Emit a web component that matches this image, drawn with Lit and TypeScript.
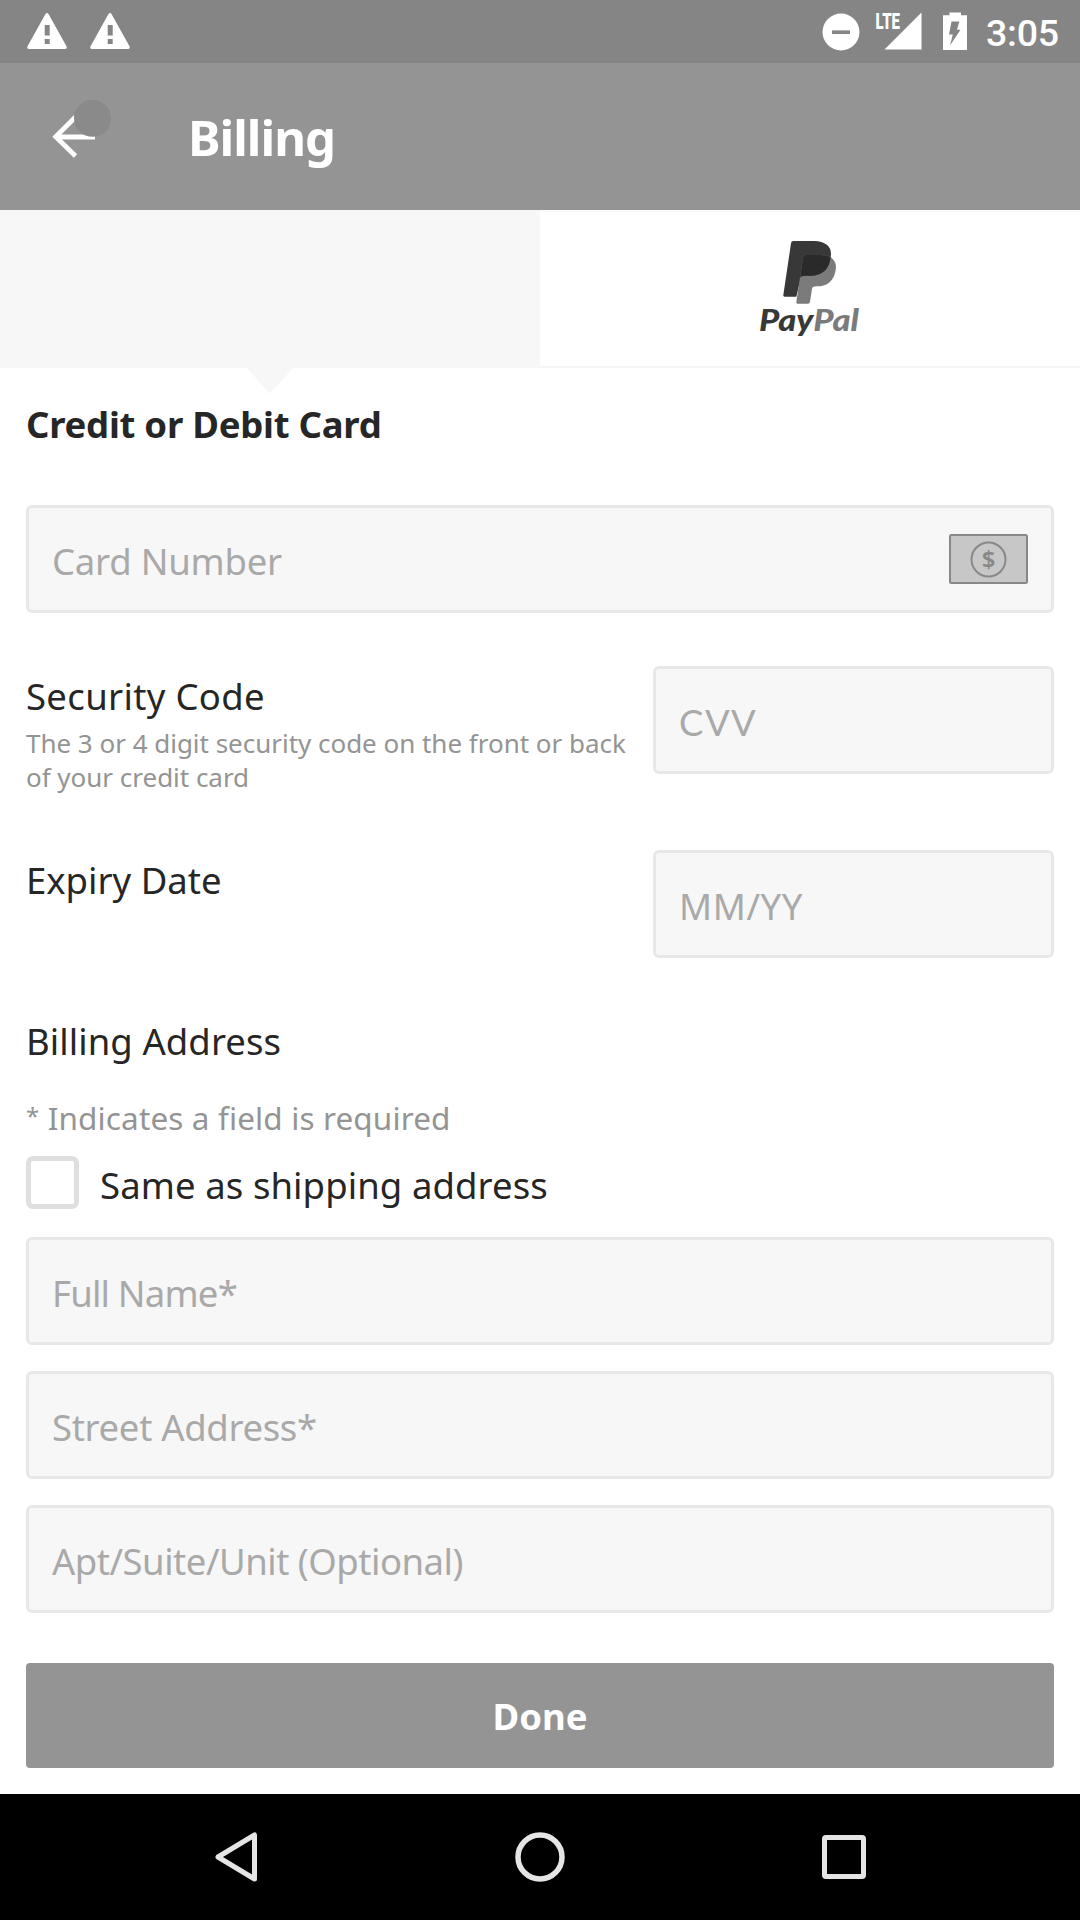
import { LitElement, html, css, svg } from "lit";
import { customElement, property } from "lit/decorators.js";

@customElement("form-field")
export class FormField extends LitElement {
  @property() label = "";
  static styles = css`
    :host {
      display: flex;
      align-items: center;
      justify-content: space-between;
      box-sizing: border-box;
      height: 108px;
      border: 3px solid #e8e8e8;
      border-radius: 6px;
      background: #f7f7f7;
      padding: 0 23px;
      font-size: 36.5px;
      line-height: 44px;
      color: #a9a9a9;
    }
    .label {
      padding-top: 3px;
      white-space: nowrap;
    }
  `;
  render() {
    return html`<span class="label">${this.label}</span><slot></slot>`;
  }
}

const warning = svg`
  <path fill="#fff" fill-rule="evenodd" d="M18.2 1.4 Q20 -1.4 21.8 1.4 L39.6 33.5 Q40.3 36 37.8 36 H2.200 Q-.3 36 .4 33.500Z M17.700 12 V22.500 H22.700 V12Z M17.700 26 V31 H22.700 V26Z"/>`;

@customElement("app-root")
export class AppRoot extends LitElement {
  static styles = css`
    :host {
      display: flex;
      flex-direction: column;
      width: 1080px;
      height: 1920px;
      overflow: hidden;
      background: #fff;
      color: #262626;
      font-family: "Noto Sans", sans-serif;
    }
    svg {
      display: block;
      flex: none;
    }
    .status {
      display: flex;
      align-items: center;
      height: 63px;
      background: #858585;
      color: #fff;
    }
    .alerts {
      display: flex;
      gap: 23px;
      padding: 0 0 1px 27px;
      flex: 1;
    }
    .signals {
      width: 210px;
      height: 63px;
    }
    .clock {
      width: 94px;
      font: 500 37.5px/44px Roboto, sans-serif;
      letter-spacing: -0.27px;
      padding-top: 2px;
    }
    .lte {
      font: 900 22px Roboto, sans-serif;
    }
    .appbar {
      display: flex;
      align-items: center;
      height: 147px;
      background: #949494;
      color: #fff;
    }
    .back {
      width: 188px;
      height: 147px;
    }
    .title {
      font-weight: 700;
      font-size: 49px;
      line-height: 60px;
      letter-spacing: -0.99px;
    }
    .tabs {
      display: grid;
      grid-template-columns: 1fr 1fr;
      height: 158px;
    }
    .tab {
      position: relative;
      background: #f7f7f7;
    }
    .pointer {
      position: absolute;
      left: 247px;
      top: 158px;
    }
    .paypal {
      display: flex;
      justify-content: center;
      box-sizing: border-box;
      border-top: 2px solid #f9f9f9;
      border-bottom: 2px solid #f5f5f5;
    }
    .brand {
      font: italic 900 30px Lato, sans-serif;
    }
    .form {
      display: flex;
      flex-direction: column;
      padding: 34px 26px 26px;
    }
    .heading {
      font-size: 36.5px;
      line-height: 44px;
      letter-spacing: -0.25px;
      font-weight: 700;
      margin: 0 0 59px;
    }
    .row {
      display: flex;
      justify-content: space-between;
    }
    .row form-field {
      width: 401px;
    }
    .security {
      margin-top: 53px;
      height: 128px;
    }
    .expiry {
      margin-top: 56px;
      height: 108px;
    }
    .label {
      font-size: 36.5px;
      line-height: 44px;
      padding-top: 8px;
      white-space: nowrap;
    }
    .code {
      letter-spacing: 0.33px;
    }
    .hint {
      margin-top: 8px;
      font-size: 26px;
      line-height: 34px;
      letter-spacing: -0.02px;
      color: #949494;
      white-space: nowrap;
    }
    .address {
      font-size: 36.5px;
      line-height: 44px;
      margin-top: 61px;
      letter-spacing: 0.07px;
    }
    .required {
      font-size: 31.5px;
      line-height: 40px;
      height: 40px;
      margin-top: 35px;
      letter-spacing: 0.13px;
      color: #949494;
    }
    .asterisk {
      font-size: 24px;
      line-height: 24px;
      vertical-align: 5px;
    }
    .same {
      display: flex;
      align-items: center;
      gap: 21px;
      height: 53px;
      margin: 18px 0 28px;
      font-size: 36.5px;
      line-height: 44px;
      letter-spacing: 0.09px;
    }
    .same-text {
      padding-top: 5px;
    }
    .box {
      box-sizing: border-box;
      width: 53px;
      height: 53px;
      border: 5px solid #dfdfdf;
      border-radius: 7px;
    }
    .fields {
      display: flex;
      flex-direction: column;
      gap: 26px;
    }
    .card {
      letter-spacing: -0.23px;
    }
    .cvv {
      font-family: Lato, sans-serif;
      letter-spacing: 1.5px;
    }
    .mmyy {
      letter-spacing: 0.6px;
    }
    .name {
      letter-spacing: -0.79px;
    }
    .street {
      letter-spacing: -0.32px;
    }
    .apt {
      letter-spacing: -0.49px;
    }
    .dollar {
      font: 600 24px "Noto Sans", sans-serif;
      letter-spacing: 0;
    }
    .done {
      display: flex;
      align-items: center;
      justify-content: center;
      height: 105px;
      margin-top: 50px;
      border: 0;
      border-radius: 4px;
      background: #949494;
      color: #fff;
      font: 700 36.5px/44px "Noto Sans", sans-serif;
    }
    .nav {
      display: flex;
      align-items: center;
      justify-content: center;
      gap: 240px;
      flex: 1;
      background: #000;
    }
  `;

  render() {
    return html`
      <div class="status">
        <div class="alerts">
          <svg width="40" height="36">${warning}</svg>
          <svg width="40" height="36">${warning}</svg>
        </div>
        <svg class="signals" viewBox="776 0 210 63">
          <circle cx="841" cy="32" r="18.500" fill="#fff" />
          <path d="M832 32.200 H850" stroke="#858585" stroke-width="3.700" />
          <text class="lte" x="875.500" y="29.300" textLength="24.500" lengthAdjust="spacingAndGlyphs" fill="#fff">LTE</text>
          <path d="M921.500 12.500 V49.500 H884.500Z" fill="#fff" />
          <path d="M949.500 12.500 H961 V15.300 H967 V50 H943 V15.300 H949.500Z" fill="#fff" />
          <path d="M951.500 21.500 H959.300 L957 29.700 H960.500 L950 45.500 L952.800 34.500 H949Z" fill="#858585" />
        </svg>
        <div class="clock">3:05</div>
      </div>
      <div class="appbar">
        <svg class="back" viewBox="0 63 188 147">
          <path d="M75.500 117 L55.700 136.700 L75.500 156 M55.700 137 H95" fill="none" stroke="#fff" stroke-width="4.800" />
          <circle cx="92.500" cy="118.300" r="18.500" fill="#8a8a8a" />
        </svg>
        <div class="title">Billing</div>
      </div>
      <div class="tabs">
        <div class="tab">
          <svg class="pointer" width="46" height="26"><path d="M0 0 H46 L24.500 24.300 Q23 25.500 21.500 24.300Z" fill="#f7f7f7" /></svg>
        </div>
        <div class="paypal">
          <svg width="160" height="154" viewBox="0 36 480 462">
            <path d="M190 123 H252 Q303 125 303 163 Q297 228 240 228 H214 L199 290 H164 Q159 290 160 285 L183 130 Q184 123 190 123Z" fill="#383838" />
            <path d="M226 165 H278 Q318 170 318 203 Q312 259 260 259 Q247 259 246 266 L240 305 Q239 311 234 311 H203 Q198 311 199 306 L219 172 Q220 165 226 165Z" fill="#7b7b7b" />
            <path d="M226 165 H272 Q290 165 302 172 Q296 228 238 228 Q214 226 210 234 L219 172 Q220 165 226 165Z" fill="#2a2a2a" />
            <g transform="scale(3)">
              <text class="brand" x="29" y="131" textLength="100" lengthAdjust="spacingAndGlyphs" fill="#383838">Pay<tspan fill="#7b7b7b">Pal</tspan></text>
            </g>
          </svg>
        </div>
      </div>
      <div class="form">
        <h2 class="heading">Credit or Debit Card</h2>
        <form-field class="card" label="Card Number">
          <svg width="79" height="50" viewBox="0 0 79 50">
            <rect x="1" y="1" width="77" height="48" rx="1.500" fill="#c7c7c7" stroke="#888" stroke-width="2" />
            <circle cx="39.500" cy="25.500" r="17" fill="none" stroke="#888" stroke-width="2" />
            <text class="dollar" x="39.500" y="34" text-anchor="middle" fill="#888">$</text>
          </svg>
        </form-field>
        <div class="row security">
          <div>
            <div class="label code">Security Code</div>
            <div class="hint">The 3 or 4 digit security code on the front or back<br />of your credit card</div>
          </div>
          <form-field class="cvv" label="CVV"></form-field>
        </div>
        <div class="row expiry">
          <div class="label">Expiry Date</div>
          <form-field class="mmyy" label="MM/YY"></form-field>
        </div>
        <div class="address">Billing Address</div>
        <div class="required"><span class="asterisk">*</span> Indicates a field is required</div>
        <div class="same">
          <span class="box"></span>
          <span class="same-text">Same as shipping address</span>
        </div>
        <div class="fields">
          <form-field class="name" label="Full Name*"></form-field>
          <form-field class="street" label="Street Address*"></form-field>
          <form-field class="apt" label="Apt/Suite/Unit (Optional)"></form-field>
        </div>
        <button class="done">Done</button>
      </div>
      <div class="nav">
        <svg width="64" height="64"><path d="M14 32 L50.500 10 V54Z" fill="none" stroke="#e5e5e5" stroke-width="5" stroke-linejoin="round" /></svg>
        <svg width="64" height="64"><circle cx="32" cy="32" r="22" fill="none" stroke="#e5e5e5" stroke-width="5.500" /></svg>
        <svg width="64" height="64"><rect x="12.500" y="12.500" width="39" height="39" rx="1.500" fill="none" stroke="#e5e5e5" stroke-width="5" /></svg>
      </div>
    `;
  }
}
